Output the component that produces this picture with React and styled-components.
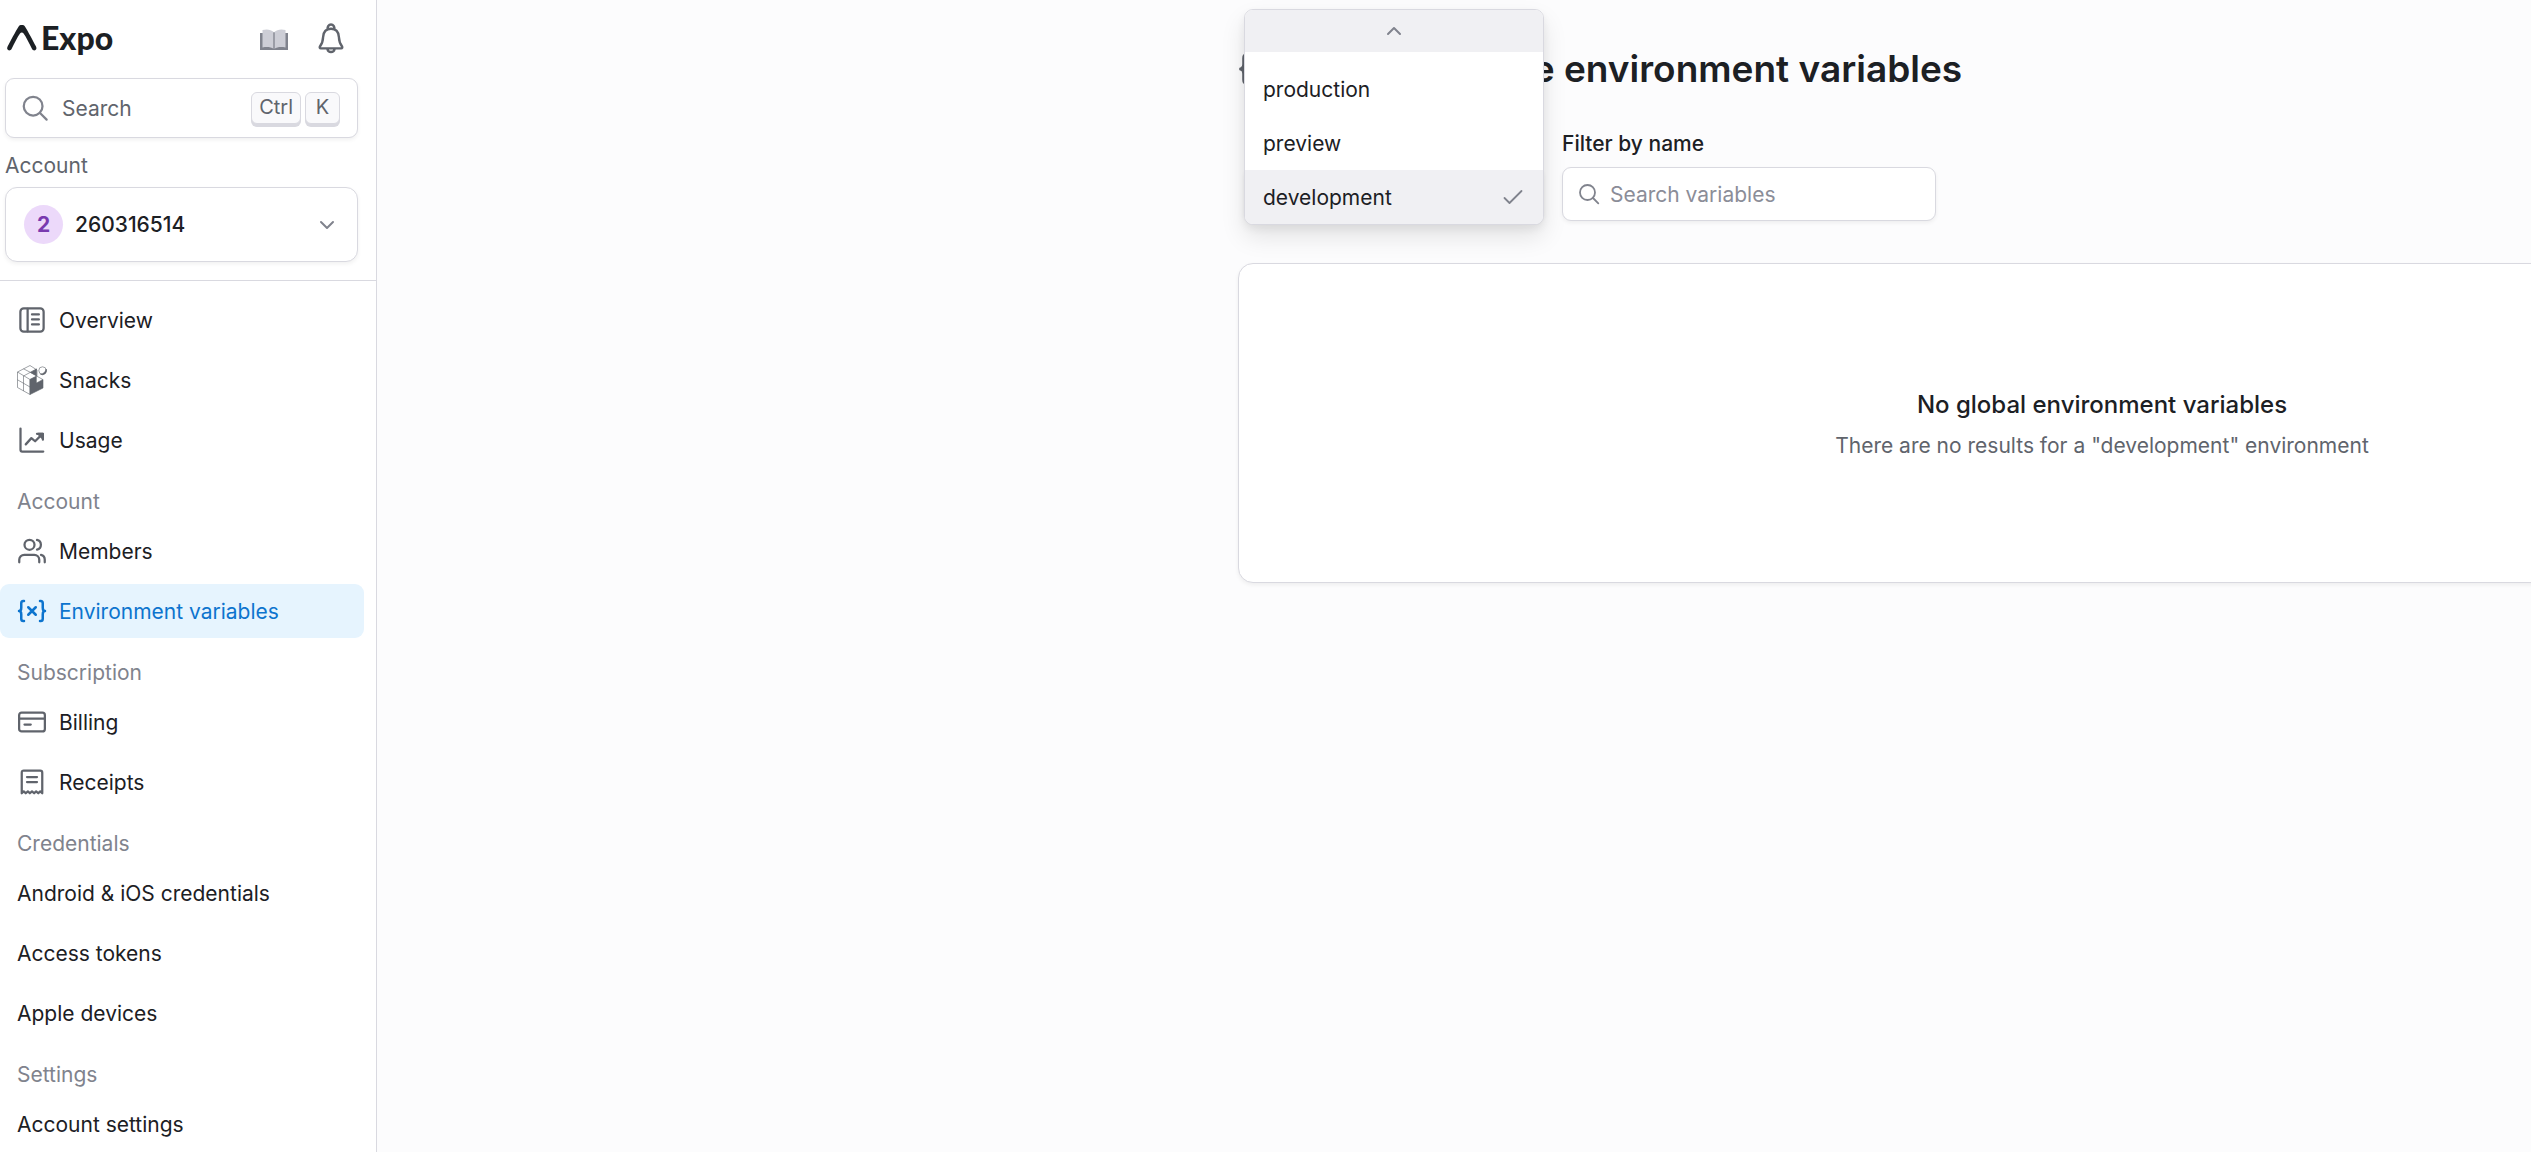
import React, { useState } from "react";
import styled, { createGlobalStyle, css } from "styled-components";

const color = {
  text: "#1c2024",
  secondary: "#60646c",
  tertiary: "#80838d",
  border: "#d9d9e0",
  hover: "#f0f0f3",
  screen: "#fcfcfd",
  blue: "#0d74ce",
  blueSoft: "#e6f4fe",
};

const GlobalStyle = createGlobalStyle`
  *, *::before, *::after { box-sizing: border-box; }
  body {
    margin: 0;
    background: ${color.screen};
    color: ${color.text};
    font-family: Inter, "Liberation Sans", sans-serif;
    font-size: 21px;
    line-height: 33px;
  }
  button, input { font: inherit; color: inherit; }
  h1, h2, p { margin: 0; padding: 0; }
`;

const Page = styled.div`
  display: flex;
  height: 100vh;
  overflow: hidden;
`;

const Sidebar = styled.aside`
  flex: none;
  display: flex;
  flex-direction: column;
  width: 377px;
  border-right: 1px solid ${color.border};
  background: #fff;
`;

const SidebarTop = styled.div`
  flex: none;
  display: flex;
  flex-direction: column;
  padding: 0 18px 18px 5px;
  border-bottom: 1px solid ${color.border};
`;

const TopBar = styled.header`
  display: flex;
  align-items: center;
  justify-content: space-between;
  height: 78px;
`;

const LogoLink = styled.a`
  display: flex;
  align-items: center;
  gap: 4px;
  padding-bottom: 3px;
  color: ${color.text};
  font-family: Lato, sans-serif;
  font-size: 32px;
  font-weight: 900;
  text-decoration: none;
`;

const TopActions = styled.div`
  display: flex;
  gap: 18px;
  padding-right: 8px;
`;

const IconButton = styled.button`
  display: grid;
  place-items: center;
  width: 39px;
  height: 39px;
  padding: 0;
  border: 0;
  background: none;
  color: ${color.secondary};
`;

const panel = css`
  border: 1px solid ${color.border};
  background: #fff;
  box-shadow: 0 2px 4px rgba(0, 0, 0, 0.06);
`;

const SearchButton = styled.button`
  ${panel}
  display: flex;
  align-items: center;
  gap: 12px;
  width: 100%;
  height: 60px;
  padding: 0 17px 0 14px;
  border-radius: 9px;
  color: ${color.secondary};
  text-align: left;

  svg {
    color: ${color.tertiary};
  }
`;

const Grow = styled.span`
  flex: 1;
`;

const Keys = styled.span`
  display: flex;
  gap: 4px;
`;

const Key = styled.kbd`
  height: 32px;
  min-width: 35px;
  padding: 0 7px;
  border: 1px solid ${color.border};
  border-radius: 6px;
  background: #f9f9fb;
  box-shadow: 0 3px 0 ${color.border};
  font-family: inherit;
  font-size: 20px;
  line-height: 29px;
  text-align: center;
`;

const FieldLabel = styled.span`
  padding: 11px 0 5px;
  color: ${color.secondary};
`;

const AccountButton = styled.button`
  ${panel}
  display: flex;
  align-items: center;
  gap: 12px;
  width: 100%;
  height: 75px;
  padding: 0 18px;
  border-radius: 12px;
  font-weight: 500;
  text-align: left;

  svg {
    color: ${color.tertiary};
  }
`;

const Avatar = styled.span`
  width: 39px;
  height: 39px;
  border-radius: 50%;
  background: #ecd9fa;
  color: #793aaf;
  font-weight: 700;
  line-height: 39px;
  text-align: center;
`;

const Nav = styled.nav`
  display: flex;
  flex-direction: column;
  gap: 6px;
  padding: 12px 12px 12px 0;
`;

const NavHeading = styled.span`
  padding: 12px 0 0 17px;
  color: ${color.tertiary};
`;

const NavLink = styled.a`
  flex: none;
  display: flex;
  align-items: center;
  gap: 12px;
  height: 54px;
  padding: 0 17px;
  border-radius: 9px;
  background: ${(p) => (p.$active ? color.blueSoft : "transparent")};
  color: ${(p) => (p.$active ? color.blue : color.text)};
  text-decoration: none;

  svg {
    color: ${(p) => (p.$active ? color.blue : color.secondary)};
  }
`;

const Main = styled.main`
  flex: 1;
  min-width: 0;
  overflow: hidden;
  padding: 41px 0 42px 861px;
`;

const Content = styled.div`
  width: 1728px;
`;

const TitleRow = styled.div`
  display: flex;
  align-items: center;
  gap: 22px;
  height: 56px;
  color: ${color.secondary};
`;

const Title = styled.h1`
  color: ${color.text};
  font-size: 37px;
  font-weight: 600;
  line-height: 54px;
`;

const Filters = styled.form`
  display: flex;
  align-items: flex-end;
  gap: 18px;
  padding: 30px 0 42px 6px;
`;

const Picker = styled.div`
  position: relative;
  width: 300px;
`;

const PickerTrigger = styled.button`
  ${panel}
  display: block;
  width: 100%;
  height: 54px;
  border-radius: 9px;
`;

const PickerPopup = styled.div`
  position: absolute;
  right: 0;
  bottom: -4px;
  left: 0;
  overflow: hidden;
  border: 1px solid ${color.border};
  border-radius: 9px;
  background: #fff;
  box-shadow: 0 12px 24px rgba(0, 0, 0, 0.1), 0 4px 9px rgba(0, 0, 0, 0.06);
`;

const ScrollUp = styled.button`
  display: grid;
  place-items: center;
  width: 100%;
  height: 42px;
  margin-bottom: 10px;
  padding: 0;
  border: 0;
  background: ${color.hover};
  color: ${color.tertiary};
`;

const Option = styled.button`
  display: flex;
  align-items: center;
  justify-content: space-between;
  width: 100%;
  height: 54px;
  padding: 0 18px;
  border: 0;
  background: ${(p) => (p.$selected ? color.hover : "#fff")};

  svg {
    color: ${color.tertiary};
  }
`;

const Field = styled.div`
  display: flex;
  flex-direction: column;
  gap: 7px;
`;

const Label = styled.label`
  font-weight: 500;
`;

const InputShell = styled.div`
  ${panel}
  display: flex;
  align-items: center;
  gap: 9px;
  width: 374px;
  height: 54px;
  padding: 0 14px;
  border-radius: 9px;
  color: ${color.tertiary};
`;

const TextInput = styled.input`
  flex: 1;
  min-width: 0;
  padding: 0;
  border: 0;
  outline: 0;
  background: transparent;
  color: ${color.text};

  &::placeholder {
    color: #8b8d98;
    opacity: 1;
  }
`;

const EmptyCard = styled.section`
  ${panel}
  display: flex;
  flex-direction: column;
  align-items: center;
  gap: 5px;
  padding: 121px 24px 120px;
  border-radius: 15px;
`;

const EmptyTitle = styled.h2`
  font-size: 24px;
  font-weight: 500;
  line-height: 39px;
`;

const EmptyText = styled.p`
  color: ${color.secondary};
`;

function Svg({ size = 30, stroke = 1.8, children }) {
  return (
    <svg width={size} height={size} viewBox="0 0 24 24" fill="none" stroke="currentColor" strokeWidth={stroke} strokeLinecap="round" strokeLinejoin="round" aria-hidden="true">
      {children}
    </svg>
  );
}

const ExpoMark = () => (
  <svg width="32" height="28" viewBox="0 0 32 28" aria-hidden="true">
    <path
      fill="currentColor"
      d="M16.800 8.400C16.100 8.400 15.600 8.700 15 9.500C12.500 13 9.300 19.500 6.800 24.500C5.800 26.500 4.200 26.800 3.100 26.100C1.900 25.300 1.900 23.900 2.700 22.300C5.500 17 10.500 7.500 13.500 2.700C14.400 1.300 15.300 1 16.800 1S19.200 1.300 20.100 2.700C23.100 7.500 28.100 17 30.900 22.300C31.700 23.900 31.700 25.300 30.500 26.100C29.400 26.800 27.800 26.500 26.800 24.500C24.300 19.500 21.100 13 18.600 9.500C18 8.700 17.500 8.400 16.800 8.400z"
    />
  </svg>
);

const BookIcon = () => (
  <svg width="28" height="24" viewBox="0 0 28 24" aria-hidden="true">
    <path fill="#80838d" d="M0 6h28v17H0z" />
    <path fill="#cdced6" d="M2.500 3C7 1.800 11 2.500 13.700 5v17C11 20 7 19.500 2.500 20.500zM25.500 3C21 1.800 17 2.500 14.300 5v17c2.700-2 6.700-2.500 11.200-1.500z" />
    <path stroke="#80838d" d="M14 5v18" />
  </svg>
);

const BellIcon = () => (
  <Svg size={34} stroke={1.7}>
    <path d="M9.700 4.900a2.400 2.400 0 1 1 4.600 0M12 4.800c-3.500 0-5.400 2.500-5.600 6-.1 3.300-.6 4.400-2.200 6.500-.4.600-.1 1.300.6 1.300h14.400c.7 0 1-.7.600-1.300-1.600-2.100-2.100-3.200-2.200-6.500-.2-3.500-2.100-6-5.600-6zM9.500 19.200c.3 1.300 1.300 2 2.500 2s2.200-.7 2.500-2" />
  </Svg>
);

const SearchIcon = ({ size, stroke }) => (
  <Svg size={size} stroke={stroke}>
    <circle cx="10.500" cy="10.500" r="7.500" />
    <path d="M16 16l5.300 5.300" />
  </Svg>
);

const ChevronIcon = ({ up }) => (
  <Svg size={24} stroke={2}>
    <path d={up ? "M6 15l6-6 6 6" : "M6 9l6 6 6-6"} />
  </Svg>
);

const CheckIcon = () => (
  <Svg size={24} stroke={1.8}>
    <path d="M3.500 13l5 5L20.500 6" />
  </Svg>
);

const OverviewIcon = () => (
  <Svg>
    <rect x="2.700" y="2.700" width="18.600" height="18.600" rx="2.700" />
    <path d="M8.500 3v18M12 7.500h5.500M12 11.500h5.500M12 15.500h5.500" />
  </Svg>
);

const SnacksIcon = () => (
  <svg width="30" height="30" viewBox="0 0 30 30" fill="none" stroke="#60646c" strokeWidth="0.6" aria-hidden="true">
    <path fill="#fff" d="M13 .5L.5 7v15.500L13 29.500V14.500L20 11V5z" />
    <path d="M6.500 3.800l13 6.700M19.500 4L6.500 11M.5 7L13 14.500M6.500 11v15M.5 14.800L13 22" />
    <path fill="#60646c" d="M13 14.500l6-3v6.500l7-3.500v8.500l-13 6.500zM13.500 7.500L19.500 4v7z" />
    <path fill="#fff" d="M19.500 11l6.300 3.500-6.300 3.500z" />
    <circle cx="25.500" cy="5.500" r="3.700" fill="#fff" />
    <path fill="#60646c" d="M29.200 4a4.100 4.100 0 0 1-5.800 5.200c2.500.2 4.700-1.700 5.800-5.200z" />
  </svg>
);

const UsageIcon = () => (
  <Svg>
    <path d="M2.800 2.800v17c0 .8.600 1.400 1.400 1.400H21M7 15.500l4.500-5 3 2.500 5.500-5.500M16 7h4.700v4.700" />
    <path fill="currentColor" d="M17 7h3.700v3.700z" />
  </Svg>
);

const MembersIcon = () => (
  <Svg>
    <circle cx="10" cy="7" r="4" />
    <path d="M1.800 21v-2a4 4 0 0 1 4-4h8a4 4 0 0 1 4 4v2M22.200 21v-2a4 4 0 0 0-3-3.900M16 3.100a4 4 0 0 1 0 7.800" />
  </Svg>
);

const VariablesIcon = ({ size }) => (
  <Svg size={size} stroke={2}>
    <path d="M5.600 4H5C3.900 4 3.400 4.700 3.400 5.800v3.500C3.400 11 2.800 12 1.600 12c1.200 0 1.800 1 1.800 2.700v3.500c0 1.100.5 1.800 1.600 1.800h.6M18.400 4h.6c1.100 0 1.600.7 1.600 1.800v3.500c0 1.700.6 2.700 1.800 2.700-1.200 0-1.800 1-1.800 2.700v3.500c0 1.100-.5 1.800-1.600 1.800h-.6M9 9l6 6M15 9l-6 6" />
  </Svg>
);

const BillingIcon = () => (
  <Svg>
    <rect x="1.700" y="4.500" width="20.600" height="15" rx="2" />
    <path d="M2 9.200h20M6 14h5" />
  </Svg>
);

const ReceiptsIcon = () => (
  <Svg>
    <path d="M3.800 21V4.500C3.800 3.500 4.400 2.800 5.400 2.800h13.200c1 0 1.600.7 1.600 1.700V21l-1.600-1.500L17 21l-1.700-1.500L13.700 21 12 19.500 10.300 21l-1.600-1.500L7 21l-1.600-1.500zM8 8h8M8 12h8" />
  </Svg>
);

const sections = [
  {
    items: [
      { label: "Overview", icon: <OverviewIcon /> },
      { label: "Snacks", icon: <SnacksIcon /> },
      { label: "Usage", icon: <UsageIcon /> },
    ],
  },
  {
    heading: "Account",
    items: [
      { label: "Members", icon: <MembersIcon /> },
      { label: "Environment variables", icon: <VariablesIcon />, active: true },
    ],
  },
  {
    heading: "Subscription",
    items: [
      { label: "Billing", icon: <BillingIcon /> },
      { label: "Receipts", icon: <ReceiptsIcon /> },
    ],
  },
  {
    heading: "Credentials",
    items: [{ label: "Android & iOS credentials" }, { label: "Access tokens" }, { label: "Apple devices" }],
  },
  { heading: "Settings", items: [{ label: "Account settings" }] },
];

const environments = ["production", "preview", "development"];

export default function App() {
  const [environment, setEnvironment] = useState("development");
  const [query, setQuery] = useState("");

  return (
    <Page>
      <GlobalStyle />
      <Sidebar>
        <SidebarTop>
          <TopBar>
            <LogoLink href="#home">
              <ExpoMark />
              Expo
            </LogoLink>
            <TopActions>
              <IconButton type="button" aria-label="Documentation">
                <BookIcon />
              </IconButton>
              <IconButton type="button" aria-label="Notifications">
                <BellIcon />
              </IconButton>
            </TopActions>
          </TopBar>
          <SearchButton type="button">
            <SearchIcon size={30} stroke={1.8} />
            <Grow>Search</Grow>
            <Keys>
              <Key>Ctrl</Key>
              <Key>K</Key>
            </Keys>
          </SearchButton>
          <FieldLabel id="account-label">Account</FieldLabel>
          <AccountButton type="button" aria-describedby="account-label">
            <Avatar>2</Avatar>
            <Grow>260316514</Grow>
            <ChevronIcon />
          </AccountButton>
        </SidebarTop>
        <Nav>
          {sections.map(({ heading, items }) => (
            <React.Fragment key={heading || "main"}>
              {heading && <NavHeading>{heading}</NavHeading>}
              {items.map(({ label, icon, active }) => (
                <NavLink key={label} href="#nav" $active={active} aria-current={active ? "page" : undefined}>
                  {icon}
                  {label}
                </NavLink>
              ))}
            </React.Fragment>
          ))}
        </Nav>
      </Sidebar>
      <Main>
        <Content>
          <TitleRow>
            <VariablesIcon size={42} />
            <Title>Account-wide environment variables</Title>
          </TitleRow>
          <Filters>
            <Picker>
              <PickerTrigger type="button" aria-label="Environment" aria-expanded="true" />
              <PickerPopup role="listbox" aria-label="Environment">
                <ScrollUp type="button" aria-label="Scroll up">
                  <ChevronIcon up />
                </ScrollUp>
                {environments.map((name) => (
                  <Option key={name} type="button" role="option" aria-selected={name === environment} $selected={name === environment} onClick={() => setEnvironment(name)}>
                    {name}
                    {name === environment && <CheckIcon />}
                  </Option>
                ))}
              </PickerPopup>
            </Picker>
            <Field>
              <Label htmlFor="variable-name">Filter by name</Label>
              <InputShell>
                <SearchIcon size={24} stroke={1.8} />
                <TextInput id="variable-name" placeholder="Search variables" value={query} onChange={(e) => setQuery(e.target.value)} />
              </InputShell>
            </Field>
          </Filters>
          <EmptyCard>
            <EmptyTitle>No global environment variables</EmptyTitle>
            <EmptyText>There are no results for a "{environment}" environment</EmptyText>
          </EmptyCard>
        </Content>
      </Main>
    </Page>
  );
}
